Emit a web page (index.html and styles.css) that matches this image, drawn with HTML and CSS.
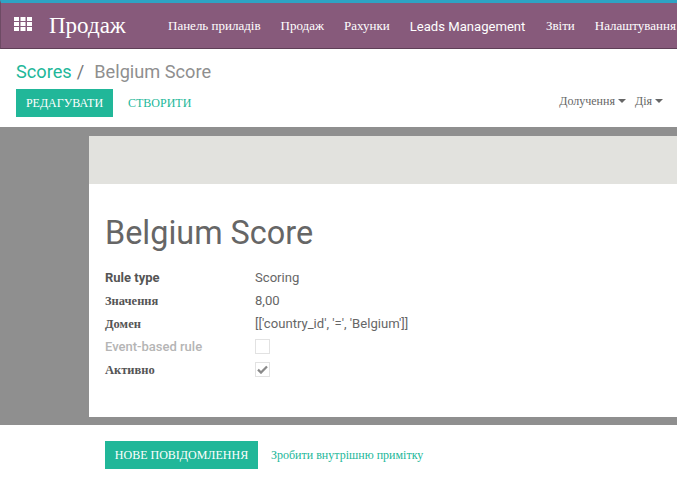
FILE: index.html
```html
<!DOCTYPE html>
<html lang="uk">
<head>
<meta charset="utf-8">
<title>Belgium Score</title>
<link rel="stylesheet" href="styles.css">
</head>
<body>
<header class="navbar">
  <svg class="apps" width="18" height="14" viewBox="0 0 18 14" aria-hidden="true">
    <g fill="#fff">
      <rect x="0" y="0" width="5" height="4"/><rect x="6.5" y="0" width="5" height="4"/><rect x="13" y="0" width="5" height="4"/>
      <rect x="0" y="5" width="5" height="4"/><rect x="6.5" y="5" width="5" height="4"/><rect x="13" y="5" width="5" height="4"/>
      <rect x="0" y="10" width="5" height="4"/><rect x="6.5" y="10" width="5" height="4"/><rect x="13" y="10" width="5" height="4"/>
    </g>
  </svg>
  <span class="brand">Продаж</span>
  <nav class="menu">
    <a class="menu-item">Панель приладів</a>
    <a class="menu-item">Продаж</a>
    <a class="menu-item">Рахунки</a>
    <a class="menu-item latin">Leads Management</a>
    <a class="menu-item">Звіти</a>
    <a class="menu-item">Налаштування</a>
  </nav>
</header>
<section class="control">
  <div class="crumbs"><span class="crumb-link">Scores</span><span class="crumb-sep">/</span><span class="crumb-cur">Belgium Score</span></div>
  <div class="actions">
    <div class="left-actions">
      <button class="btn">РЕДАГУВАТИ</button>
      <a class="link-btn">СТВОРИТИ</a>
    </div>
    <div class="dropdowns">
      <span class="drop">Долучення<i class="caret"></i></span>
      <span class="drop">Дія<i class="caret"></i></span>
    </div>
  </div>
</section>
<main class="stage">
  <div class="sheet">
    <div class="sheet-header"></div>
    <div class="sheet-body">
      <h1 class="title">Belgium Score</h1>
      <div class="fields">
        <div class="label latin">Rule type</div><div class="value">Scoring</div>
        <div class="label">Значення</div><div class="value">8,00</div>
        <div class="label">Домен</div><div class="value">[['country_id', '=', 'Belgium']]</div>
        <div class="label latin muted">Event-based rule</div><div class="value"><span class="check"></span></div>
        <div class="label">Активно</div>
        <div class="value"><span class="check"><svg width="11" height="9" viewBox="0 0 11 9" aria-hidden="true"><path d="M1 4.6 4 7.6 10 1.4" fill="none" stroke="#8a8a8a" stroke-width="2.2"/></svg></span></div>
      </div>
    </div>
  </div>
</main>
<footer class="chatter">
  <button class="btn btn-wide">НОВЕ ПОВІДОМЛЕННЯ</button>
  <a class="note">Зробити внутрішню примітку</a>
</footer>
</body>
</html>
```
FILE: styles.css
```css
* { box-sizing: border-box; }
html, body { margin: 0; padding: 0; }
body {
  width: 677px;
  height: 487px;
  overflow: hidden;
  background: #fff;
  font-family: "Liberation Serif", serif;
  color: #666;
}
.navbar {
  height: 49px;
  display: flex;
  align-items: center;
  background: #875a7b;
  border-top: 3px solid #2ea3c4;
  border-bottom: 1px solid #5f3f57;
  border-left: 1px solid #6d4a64;
  white-space: nowrap;
  overflow: hidden;
  color: #fff;
}
.apps { margin: -4px 0 0 13px; flex: none; }
.brand { font-size: 23px; margin-left: 17px; width: 119px; flex: none; }
.menu { display: flex; gap: 20px; font-size: 13px; align-items: center; flex: none; }
.menu-item { color: #fff; }
.menu-item.latin { font-family: Roboto, sans-serif; font-size: 13.1px; padding-top: 1px; margin-right: 0.5px; }
.control { height: 78px; padding: 12px 14px 0 16px; }
.crumbs { font-family: Roboto, sans-serif; font-size: 18.2px; line-height: 21px; display: flex; }
.crumb-link { color: #21b799; }
.crumb-sep { color: #777; margin: 0 10px 0 5px; }
.crumb-cur { color: #8f8f8f; }
.actions { display: flex; justify-content: space-between; margin-top: 7px; }
.left-actions { display: flex; align-items: center; gap: 15px; }
.btn {
  border: 0;
  margin: 0;
  height: 28px;
  width: 97px;
  padding: 1px 0 0;
  background: #21b799;
  color: #fff;
  font: 12px "Liberation Serif", serif;
}
.link-btn { color: #21b799; font-size: 12px; padding-top: 1px; }
.dropdowns { display: flex; gap: 9px; font-size: 12px; color: #666; padding-top: 5px; }
.drop { display: inline-flex; align-items: center; height: 14px; }
.caret {
  display: inline-block;
  margin-left: 3px;
  border-top: 4px solid #666;
  border-left: 4px solid transparent;
  border-right: 4px solid transparent;
}
.stage { height: 298px; background: #8f8f8f; padding: 9px 0 8px 89px; }
.sheet { height: 281px; background: #fff; }
.sheet-header { height: 48px; background: #e2e2de; }
.sheet-body { padding: 30px 16px 0; }
.title { margin: 0; font: 400 32.4px/38px Roboto, sans-serif; color: #666; }
.fields {
  display: grid;
  grid-template-columns: 150px 1fr;
  grid-auto-rows: 23px;
  margin-top: 14px;
  align-items: center;
  font-size: 13px;
}
.label { font-weight: 700; color: #555; font-size: 12.5px; padding-top: 1px; }
.label.latin { font-family: Roboto, sans-serif; font-size: 13px; padding-top: 0; }
.label.muted { color: #b5b5b5; font-weight: 500; }
.value { font-family: Roboto, sans-serif; color: #666; font-size: 13.1px; }
.check {
  display: flex;
  align-items: center;
  justify-content: center;
  width: 15px;
  height: 15px;
  border: 1px solid #e2e2e2;
  background: #fff;
}
.chatter { display: flex; align-items: center; gap: 13px; padding: 16px 0 0 105px; }
.btn-wide { width: 153px; font-size: 12px; }
.note { color: #21b799; font-size: 12px; padding-top: 1px; }
```
